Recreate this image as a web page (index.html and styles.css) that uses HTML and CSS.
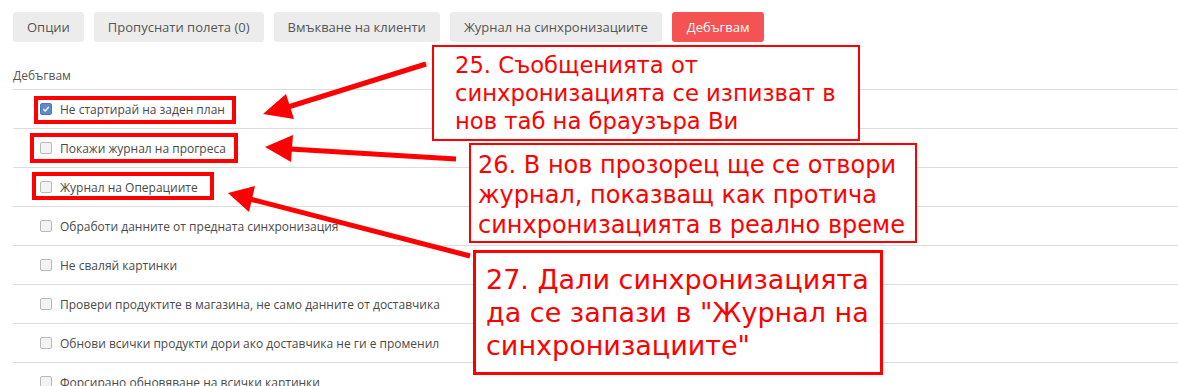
FILE: index.html
```html
<!DOCTYPE html>
<html lang="bg">
<head>
<meta charset="utf-8">
<title>Дебъгвам</title>
<link rel="stylesheet" href="styles.css">
</head>
<body>
<div class="page">
  <nav class="tabs">
    <button class="tab">Опции</button>
    <button class="tab">Пропуснати полета (0)</button>
    <button class="tab">Вмъкване на клиенти</button>
    <button class="tab">Журнал на синхронизациите</button>
    <button class="tab active">Дебъгвам</button>
  </nav>

  <div class="section-title">Дебъгвам</div>

  <ul class="options">
    <li class="option"><span class="cb checked"><svg viewBox="0 0 12 12" width="12" height="12"><path d="M2.8 6.2 L5 8.4 L9.3 3.6" fill="none" stroke="#fff" stroke-width="1.8"/></svg></span>Не стартирай на заден план</li>
    <li class="option"><span class="cb"></span>Покажи журнал на прогреса</li>
    <li class="option"><span class="cb"></span>Журнал на Операциите</li>
    <li class="option"><span class="cb"></span>Обработи данните от предната синхронизация</li>
    <li class="option"><span class="cb"></span>Не сваляй картинки</li>
    <li class="option"><span class="cb"></span>Провери продуктите в магазина, не само данните от доставчика</li>
    <li class="option"><span class="cb"></span>Обнови всички продукти дори ако доставчика не ги е променил</li>
    <li class="option"><span class="cb"></span>Форсирано обновяване на всички картинки</li>
  </ul>

  <div class="hl hl1"></div>
  <div class="hl hl2"></div>
  <div class="hl hl3"></div>

  <svg class="arrows" width="1178" height="386" viewBox="0 0 1178 386">
    <g fill="#ff0000" stroke="#ff0000">
      <line x1="426" y1="64" x2="288" y2="107" stroke-width="5"/>
      <polygon points="263,114 286,94 294,119" stroke="none"/>
      <line x1="456" y1="159" x2="290" y2="149" stroke-width="5"/>
      <polygon points="265,147 293,135 291,162" stroke="none"/>
      <line x1="470" y1="256" x2="250" y2="199" stroke-width="5"/>
      <polygon points="228,193 255,186 249,212" stroke="none"/>
    </g>
  </svg>

  <div class="note note-a">25. Съобщенията от<br>синхронизацията се изпизват в<br>нов таб на браузъра Ви</div>
  <div class="note note-b">26. В нов прозорец ще се отвори<br>журнал, показващ как протича<br>синхронизацията в реално време</div>
  <div class="note note-c">27. Дали синхронизацията<br>да се запази в "Журнал на<br>синхронизациите"</div>
</div>
</body>
</html>
```

FILE: styles.css
```css
html, body {
  margin: 0;
  padding: 0;
  background: #fff;
  overflow: hidden;
}

.page {
  position: relative;
  width: 1178px;
  height: 386px;
  padding: 12px 0 0 13px;
  box-sizing: border-box;
  font-family: "Open Sans", "Liberation Sans", sans-serif;
  color: #555;
}

.tabs {
  display: flex;
  gap: 10px;
}

.tab {
  height: 30px;
  padding: 0 14px;
  border: 0;
  border-radius: 3px;
  background: #ececec;
  color: #555;
  font-family: "Open Sans", "Liberation Sans", sans-serif;
  font-size: 13px;
  line-height: 30px;
}

.tab.active {
  padding: 0 15px;
  background: #f55353;
  color: #fff;
}

.section-title {
  margin-top: 24px;
  padding-bottom: 3px;
  font-size: 12px;
  line-height: 20px;
  color: #555;
}

.options {
  list-style: none;
  margin: 0;
  padding: 0;
}

.option {
  display: flex;
  align-items: center;
  gap: 8px;
  height: 38px;
  padding-left: 27px;
  border-top: 1px solid #dcdcdc;
  font-size: 12px;
  color: #4a4a4a;
}

.cb {
  display: inline-flex;
  align-items: center;
  justify-content: center;
  width: 10px;
  height: 10px;
  border: 1px solid #b9b9b9;
  border-radius: 2px;
  background: #f3f3f3;
  flex: none;
}

.cb.checked {
  background: #5b8ad0;
  border-color: #4c78bd;
}

.cb svg {
  display: block;
}

.hl {
  position: absolute;
  border: 4px solid #ff0000;
  box-sizing: border-box;
}

.hl1 { left: 34px; top: 96px; width: 202px; height: 28px; }
.hl2 { left: 30px; top: 133px; width: 208px; height: 30px; }
.hl3 { left: 32px; top: 172px; width: 182px; height: 28px; }

.arrows {
  position: absolute;
  left: 0;
  top: 0;
}

.note {
  position: absolute;
  background: #fff;
  border: 2px solid #ff0000;
  box-sizing: border-box;
  color: #ff0000;
  font-family: "DejaVu Sans", sans-serif;
  white-space: nowrap;
}

.note-a {
  left: 432px;
  top: 45px;
  width: 428px;
  height: 96px;
  padding: 4px 0 0 21px;
  font-size: 22.7px;
  line-height: 28px;
}

.note-b {
  left: 469px;
  top: 143px;
  width: 448px;
  height: 100px;
  padding: 5px 0 0 7px;
  font-size: 24px;
  line-height: 30px;
}

.note-c {
  left: 473px;
  top: 250px;
  width: 410px;
  height: 125px;
  border-width: 3px;
  padding: 10px 0 0 10px;
  font-size: 27px;
  line-height: 33px;
}
```
